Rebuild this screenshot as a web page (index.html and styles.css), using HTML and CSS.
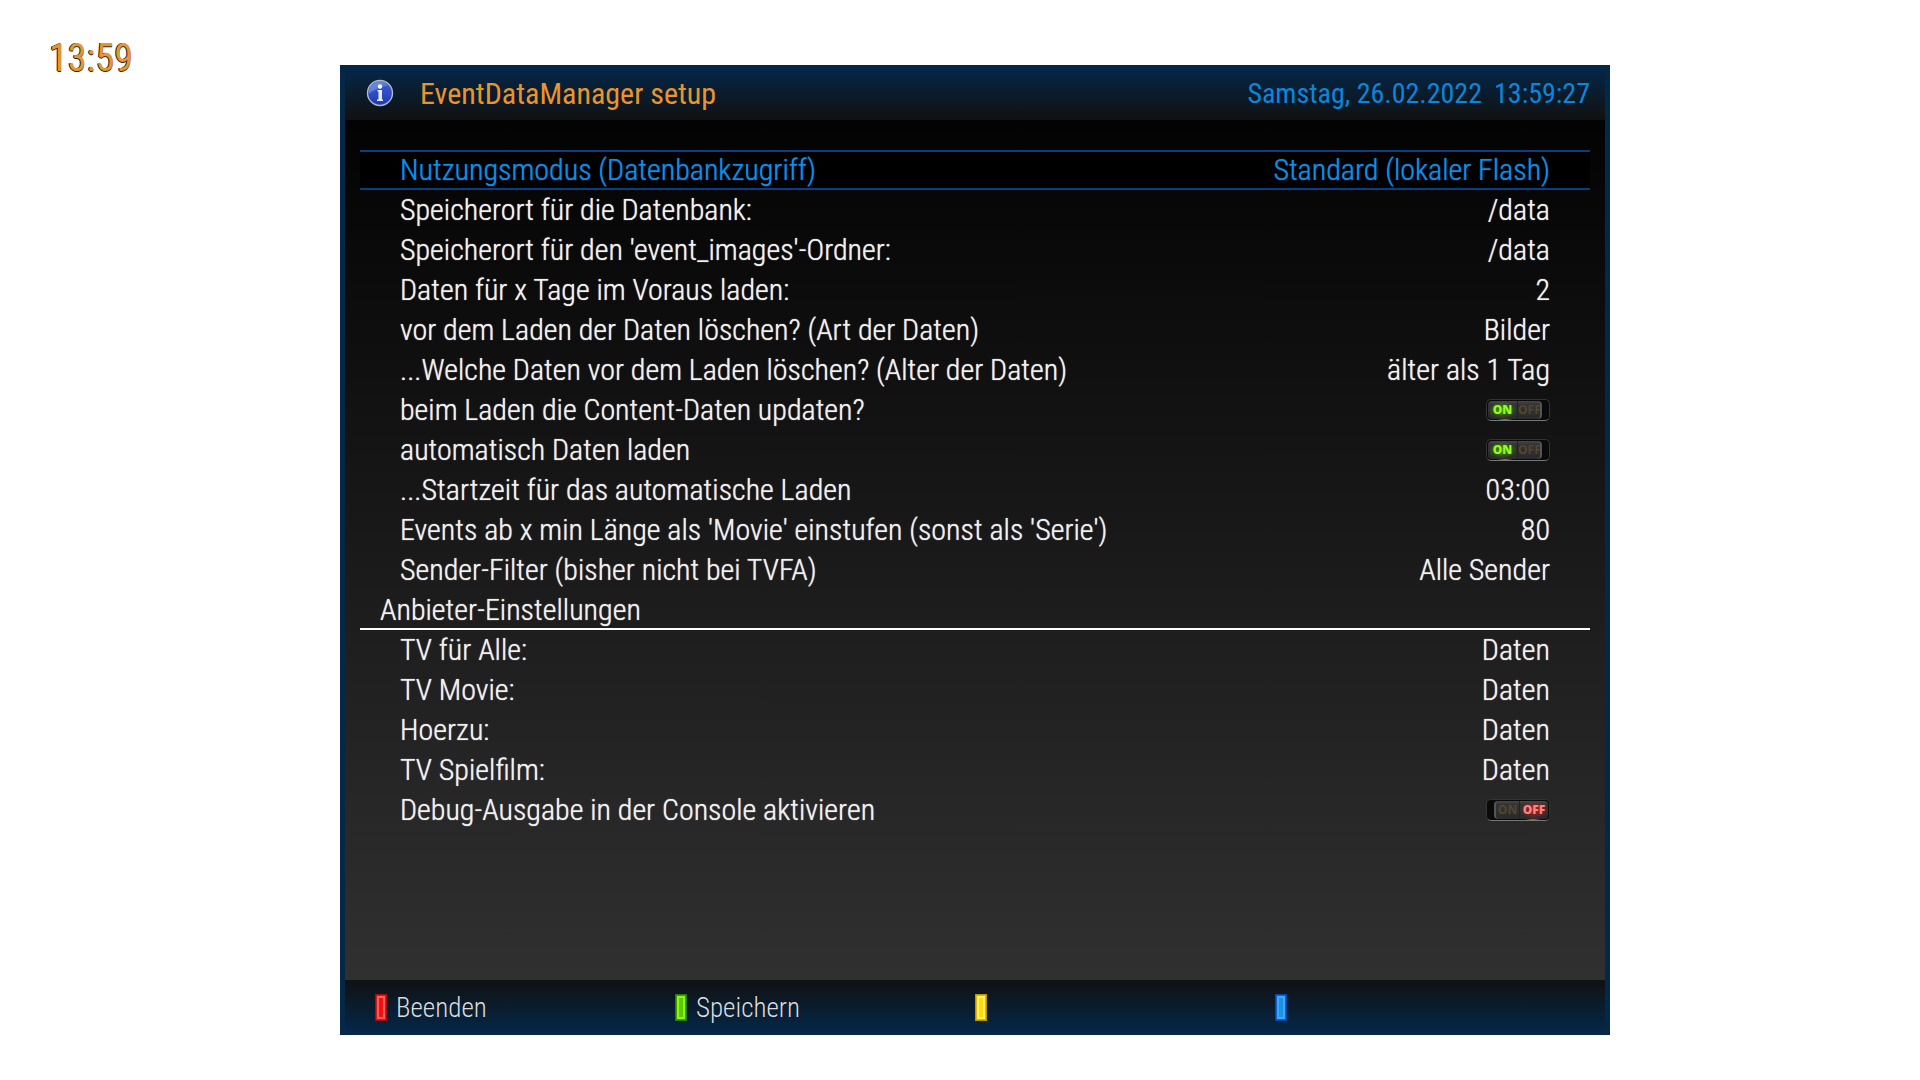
FILE: index.html
```html
<!DOCTYPE html>
<html lang="de">
<head>
    <meta charset="UTF-8">
    <meta name="viewport" content="width=device-width, initial-scale=1.0">
    <title>EventDataManager setup</title>
    <link rel="stylesheet" href="styles.css">
</head>
<body>
    <div class="clock">13:59</div>

    <main class="panel">
        <header class="panel-header">
            <svg class="info-icon" viewBox="0 0 28 28" aria-hidden="true">
                <defs>
                    <linearGradient id="info-fill" x1="0" y1="0" x2="0" y2="1">
                        <stop offset="0" stop-color="#3f62d0"/>
                        <stop offset="1" stop-color="#1c38b4"/>
                    </linearGradient>
                    <linearGradient id="info-shine" x1="0" y1="0" x2="1" y2="1">
                        <stop offset="0" stop-color="#8aa6ee"/>
                        <stop offset="1" stop-color="#3d63cc"/>
                    </linearGradient>
                </defs>
                <circle cx="14" cy="14" r="12.5" fill="url(#info-fill)" stroke="#b4b8c4" stroke-width="1.4"/>
                <path d="M2.5 15a11.5 11.5 0 0 1 20-8.5Q12 8 2.5 15z" fill="url(#info-shine)" opacity=".8"/>
                <circle cx="14" cy="7.5" r="2.2" fill="#fff"/>
                <path d="M11.5 11h4.500v9.500h1v1.500h-6v-1.500h1.500v-8h-1z" fill="#e8e8ee"/>
            </svg>
            <h1 class="title">EventDataManager setup</h1>
            <div class="date"><span>Samstag, 26.02.2022</span><span>13:59:27</span></div>
        </header>

        <ul class="settings">
            <li class="row selected"><span>Nutzungsmodus (Datenbankzugriff)</span><span>Standard (lokaler Flash)</span></li>
            <li class="row"><span>Speicherort für die Datenbank:</span><span>/data</span></li>
            <li class="row"><span>Speicherort für den 'event_images'-Ordner:</span><span>/data</span></li>
            <li class="row"><span>Daten für x Tage im Voraus laden:</span><span>2</span></li>
            <li class="row"><span>vor dem Laden der Daten löschen? (Art der Daten)</span><span>Bilder</span></li>
            <li class="row"><span>...Welche Daten vor dem Laden löschen? (Alter der Daten)</span><span>älter als 1 Tag</span></li>
            <li class="row">
                <label for="update">beim Laden die Content-Daten updaten?</label>
                <div class="switch">
                    <input type="checkbox" id="update" checked>
                    <div class="rocker"><span class="on">ON</span><span class="off">OFF</span></div>
                </div>
            </li>
            <li class="row">
                <label for="auto">automatisch Daten laden</label>
                <div class="switch">
                    <input type="checkbox" id="auto" checked>
                    <div class="rocker"><span class="on">ON</span><span class="off">OFF</span></div>
                </div>
            </li>
            <li class="row"><span>...Startzeit für das automatische Laden</span><span>03:00</span></li>
            <li class="row"><span>Events ab x min Länge als 'Movie' einstufen (sonst als 'Serie')</span><span>80</span></li>
            <li class="row"><span>Sender-Filter (bisher nicht bei TVFA)</span><span>Alle Sender</span></li>
            <li class="row section"><span>Anbieter-Einstellungen</span></li>
            <li class="row"><span>TV für Alle:</span><span>Daten</span></li>
            <li class="row"><span>TV Movie:</span><span>Daten</span></li>
            <li class="row"><span>Hoerzu:</span><span>Daten</span></li>
            <li class="row"><span>TV Spielfilm:</span><span>Daten</span></li>
            <li class="row">
                <label for="debug">Debug-Ausgabe in der Console aktivieren</label>
                <div class="switch">
                    <input type="checkbox" id="debug">
                    <div class="rocker"><span class="on">ON</span><span class="off">OFF</span></div>
                </div>
            </li>
        </ul>

        <footer class="panel-footer">
            <button class="key red" type="button">Beenden</button>
            <button class="key green" type="button">Speichern</button>
            <button class="key yellow" type="button" aria-label="Gelb"></button>
            <button class="key blue" type="button" aria-label="Blau"></button>
        </footer>
    </main>
</body>
</html>
```
FILE: styles.css
```css
* {
    box-sizing: border-box;
}

body {
    margin: 0;
    min-height: 100vh;
    padding: 65px 0 45px;
    display: grid;
    grid-template-columns: 340px 1fr 310px;
    background: #fff;
    color: #f0f0f0;
    font-family: "Roboto Condensed", Roboto, sans-serif;
    font-size: 30px;
    line-height: 40px;
}

.clock {
    margin-top: -27px;
    padding-left: 49px;
    color: #e8952e;
    font-size: 38px;
    text-shadow: -1px 0 #222, 0 1px #222;
}

.panel {
    display: flex;
    flex-direction: column;
    border: 5px solid #052748;
    border-width: 0 5px;
    background: linear-gradient(#000, #333);
}

.panel-header {
    display: flex;
    align-items: center;
    height: 55px;
    padding: 0 15px 0 20px;
    background: linear-gradient(#04284b, #111);
}

.info-icon {
    width: 30px;
    height: 28px;
}

.title {
    margin: 2px auto 0 25px;
    color: #e8952e;
    font-size: 30px;
    font-weight: 400;
}

.date {
    display: flex;
    gap: 12px;
    margin-top: 2px;
    color: #0a87dc;
    font-size: 28px;
}

.settings {
    flex: 1;
    margin: 0;
    padding: 30px 15px;
    list-style: none;
    font-weight: 350;
    text-shadow: 0 0 1px currentColor;
}

.row {
    display: flex;
    align-items: center;
    justify-content: space-between;
    height: 40px;
    padding: 0 40px;
}

.selected {
    border: 2px solid #083e82;
    border-width: 2px 0;
    background: #000;
    color: #0a8fea;
}

.section {
    padding-left: 20px;
    box-shadow: inset 0 -2px #fff;
}

/* on/off rocker */
.switch {
    position: relative;
    width: 64px;
    height: 22px;
    padding: 1px 7px 1px 1px;
    border: 1px solid #333;
    border-bottom-color: #777;
    border-radius: 5px;
    background: radial-gradient(circle at 18px 21px, #a89020, transparent 8px), #0a0a0a;
}

.switch:has(input:not(:checked)) {
    padding: 1px 1px 1px 7px;
    background: radial-gradient(circle at 46px 21px, #a89020, transparent 8px), #0a0a0a;
}

.switch input {
    position: absolute;
    inset: 0;
    width: 100%;
    height: 100%;
    margin: 0;
    opacity: 0;
    cursor: pointer;
}

.rocker {
    display: grid;
    grid-template-columns: 29px 1fr;
    height: 18px;
    border-radius: 4px;
    border-right: 2px solid #555;
    background: linear-gradient(#484848, #333 20%, #2a2a2a);
    font: 700 12px/18px "Open Sans", sans-serif;
    text-align: center;
    text-shadow: none;
}

.rocker span {
    color: #54462f;
}

.rocker .off {
    border-left: 1px solid #222;
}

input:checked ~ .rocker .on {
    background: radial-gradient(closest-side, #4a9000, transparent);
    color: #8cff1a;
    font-weight: 800;
}

input:not(:checked) ~ .rocker {
    grid-template-columns: 23px 1fr;
    border-right: 0;
    border-left: 2px solid #555;
}

input:not(:checked) ~ .rocker .off {
    background: radial-gradient(closest-side, #b02020, transparent);
    color: #ff8080;
    font-weight: 800;
}

.panel-footer {
    display: grid;
    grid-template-columns: repeat(4, 300px);
    height: 55px;
    padding-left: 30px;
    background: linear-gradient(#111, #04284b);
}

.key {
    display: flex;
    align-items: center;
    gap: 9px;
    padding: 0;
    border: 0;
    background: none;
    color: #ddd;
    font: 300 27px "Roboto Condensed", Roboto, sans-serif;
}

.key::before {
    content: "";
    width: 10px;
    height: 25px;
    border: 1px solid var(--edge);
    background: var(--core);
    box-shadow: inset 0 0 0 1px var(--rim), inset 0 0 0 3px var(--light);
}

.red {
    --edge: #a80a0a;
    --rim: #e01414;
    --light: #f86060;
    --core: #f01010;
}

.green {
    --edge: #267808;
    --rim: #3c9c08;
    --light: #8cf80c;
    --core: #5cc808;
}

.yellow {
    --edge: #c09000;
    --rim: #e0b400;
    --light: #fff45c;
    --core: #ffd810;
}

.blue {
    --edge: #0844a4;
    --rim: #1060d0;
    --light: #38a8f8;
    --core: #2090e0;
}
```
